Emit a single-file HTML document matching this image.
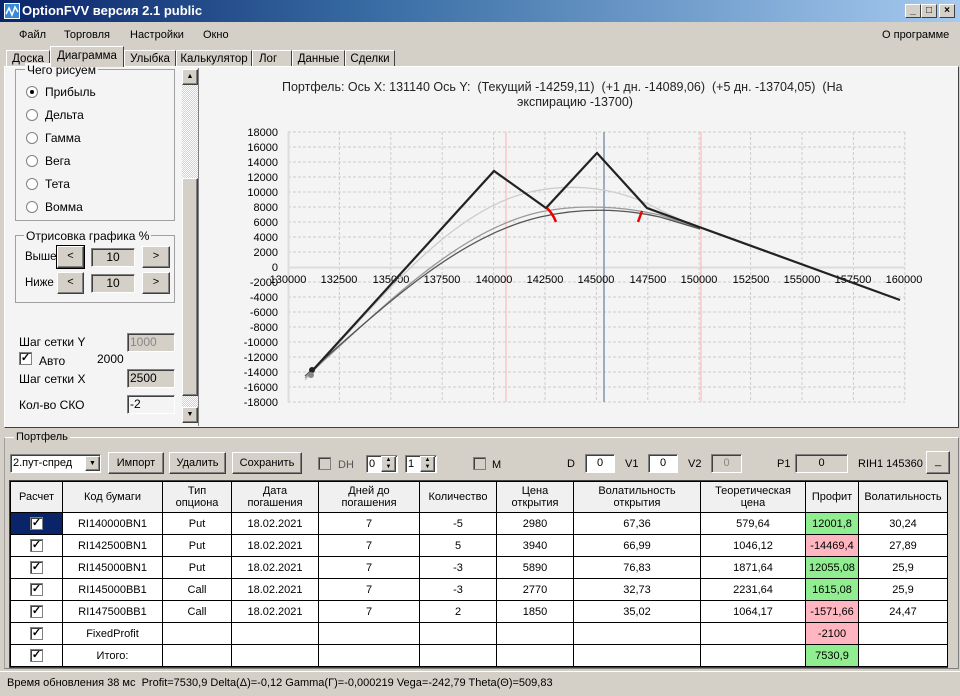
<!DOCTYPE html>
<html><head><meta charset="utf-8"><style>
*{box-sizing:border-box;margin:0;padding:0}
body{width:960px;height:696px;overflow:hidden;background:#d4d0c8;font-family:"Liberation Sans",sans-serif;font-size:11px;color:#000;position:relative}
.a{position:absolute}
.title{left:0;top:0;width:960px;height:22px;background:linear-gradient(90deg,#0a246a,#3a6ea5 40%,#a6caf0);color:#fff;font-weight:bold;font-size:13px;line-height:22px;padding-left:22px}
.tb{width:16px;height:14px;background:#d4d0c8;border:1px solid;border-color:#fff #404040 #404040 #fff;top:4px;font-size:10px;line-height:12px;text-align:center;color:#000;font-weight:bold}
.menu span{position:absolute;top:29px}
.tab{top:50px;height:17px;border:1px solid;border-color:#fff #404040 transparent #fff;background:#d4d0c8;padding-top:2px;font-size:11.5px;text-align:center;white-space:nowrap;overflow:hidden}
.grp{border:1px solid #a0a0a0}
.btn{background:#d4d0c8;border:1px solid;border-color:#fff #404040 #404040 #fff;text-align:center;box-shadow:inset -1px -1px #808080}
.fld{border:1px solid;border-color:#808080 #fff #fff #808080;box-shadow:inset 1px 1px #404040;text-align:center}
.rad{width:12px;height:12px;border-radius:50%;border:1px solid #808080;background:#fff;left:26px}
.lbl{left:45px;font-size:12px}
.cb{width:13px;height:13px;border:1px solid #808080;background:#fff;box-shadow:inset 1px 1px #404040;font-size:11px;line-height:10px;text-align:center;font-weight:bold}
table{border-collapse:collapse;position:absolute;left:10px;top:481px;background:#fff}
td{border:1px solid #000;text-align:center;height:22px;font-size:11px;padding:0}
tr.h td{height:31px;background:#f0f0f0;line-height:12px}
.g{background:#90ee90}.r{background:#ffb6c1}
</style></head><body>
<div class="a title">OptionFVV версия 2.1 public</div>
<div class="a" style="left:4px;top:3px;width:16px;height:16px;background:#3a8ad6;border:1px solid #fff"><svg width="14" height="14"><polyline points="1,10 4,4 7,11 10,3 13,8" fill="none" stroke="#fff" stroke-width="1.5"/></svg></div>
<div class="a tb" style="left:905px">_</div><div class="a tb" style="left:921px">□</div><div class="a tb" style="left:939px">×</div>
<div class="menu"><span style="left:19px">Файл</span><span style="left:64px">Торговля</span><span style="left:130px">Настройки</span><span style="left:203px">Окно</span><span style="left:882px">О программе</span></div>
<div class="a tab" style="left:6px;width:44px">Доска</div>
<div class="a tab" style="left:124px;width:52px">Улыбка</div>
<div class="a tab" style="left:176px;width:76px">Калькулятор</div>
<div class="a tab" style="left:252px;width:40px;text-align:left;padding-left:6px">Лог</div>
<div class="a tab" style="left:292px;width:53px">Данные</div>
<div class="a tab" style="left:345px;width:50px">Сделки</div>
<div class="a" style="left:4px;top:66px;width:955px;height:362px;border:1px solid;border-color:#fff #404040 #404040 #fff;background:#f4f4f4"></div>
<div class="a tab" style="left:50px;top:46px;width:74px;height:21px;padding-top:3px;border-bottom:none;z-index:2">Диаграмма</div>
<div class="a grp" style="left:15px;top:69px;width:160px;height:152px"></div>
<div class="a" style="left:25px;top:63px;background:#f4f4f4;padding:0 2px;font-size:12px">Чего рисуем</div>
<div class="a rad" style="top:86px"><div style="width:4px;height:4px;background:#000;margin:3px;border-radius:50%"></div></div><div class="a lbl" style="top:85px">Прибыль</div>
<div class="a rad" style="top:109px"></div><div class="a lbl" style="top:108px">Дельта</div>
<div class="a rad" style="top:132px"></div><div class="a lbl" style="top:131px">Гамма</div>
<div class="a rad" style="top:155px"></div><div class="a lbl" style="top:154px">Вега</div>
<div class="a rad" style="top:178px"></div><div class="a lbl" style="top:177px">Тета</div>
<div class="a rad" style="top:201px"></div><div class="a lbl" style="top:200px">Вомма</div>
<div class="a grp" style="left:15px;top:235px;width:160px;height:68px"></div>
<div class="a" style="left:24px;top:229px;background:#f4f4f4;padding:0 2px;font-size:12px">Отрисовка графика %</div>
<div class="a" style="left:25px;top:251px;font-size:11.5px">Выше</div><div class="a" style="left:25px;top:277px;font-size:11.5px">Ниже</div>
<div class="a btn" style="left:57px;top:246px;width:27px;height:22px;outline:1px solid #000;line-height:19px">&lt;</div>
<div class="a btn" style="left:57px;top:272px;width:27px;height:22px;line-height:19px">&lt;</div>
<div class="a fld" style="left:91px;top:248px;width:44px;height:19px;background:#d4d0c8;font-size:12px;line-height:17px">10</div>
<div class="a fld" style="left:91px;top:274px;width:44px;height:19px;background:#d4d0c8;font-size:12px;line-height:17px">10</div>
<div class="a btn" style="left:142px;top:246px;width:28px;height:22px;line-height:19px">&gt;</div>
<div class="a btn" style="left:142px;top:272px;width:28px;height:22px;line-height:19px">&gt;</div>
<div class="a" style="left:19px;top:335px;font-size:12px">Шаг сетки Y</div>
<div class="a fld" style="left:127px;top:333px;width:48px;height:19px;background:#d4d0c8;color:#888;text-align:left;font-size:12px;padding:1px 2px">1000</div>
<div class="a cb" style="left:19px;top:352px">✓</div><div class="a" style="left:39px;top:354px;font-size:12px">Авто</div><div class="a" style="left:97px;top:352px;font-size:12px">2000</div>
<div class="a" style="left:19px;top:372px;font-size:12px">Шаг сетки X</div>
<div class="a fld" style="left:127px;top:369px;width:48px;height:19px;background:#d4d0c8;text-align:left;font-size:12px;padding:1px 2px">2500</div>
<div class="a" style="left:19px;top:398px;font-size:12px">Кол-во СКО</div>
<div class="a fld" style="left:127px;top:395px;width:48px;height:19px;background:#f4f4f4;text-align:left;font-size:12px;padding:1px 2px">-2</div>
<div class="a" style="left:182px;top:69px;width:16px;height:354px;background:repeating-conic-gradient(#fff 0 25%,#d4d0c8 0 50%) 0 0/2px 2px"></div>
<div class="a btn" style="left:182px;top:69px;width:16px;height:16px;font-size:7px;line-height:14px">▲</div>
<div class="a btn" style="left:182px;top:178px;width:16px;height:218px"></div>
<div class="a btn" style="left:182px;top:407px;width:16px;height:16px;font-size:7px;line-height:14px">▼</div>
<div class="a" style="left:198px;top:68px;width:1px;height:358px;background:#808080"></div>
<div class="a" style="left:282px;top:80px;font-size:12.5px;color:#222;width:620px;line-height:15px">Портфель: Ось X: 131140 Ось Y:&nbsp; (Текущий -14259,11)&nbsp; (+1 дн. -14089,06)&nbsp; (+5 дн. -13704,05)&nbsp; (На<br><span style="padding-left:235px">экспирацию -13700)</span></div>
<svg class="a" style="left:0;top:0" width="960" height="430" font-family="Liberation Sans" font-size="11">
<g stroke="#ccc" stroke-dasharray="3,2">
<line x1="288" y1="132" x2="905" y2="132"/><line x1="288" y1="147" x2="905" y2="147"/><line x1="288" y1="162" x2="905" y2="162"/><line x1="288" y1="177" x2="905" y2="177"/><line x1="288" y1="192" x2="905" y2="192"/><line x1="288" y1="207" x2="905" y2="207"/><line x1="288" y1="222" x2="905" y2="222"/><line x1="288" y1="237" x2="905" y2="237"/><line x1="288" y1="252" x2="905" y2="252"/><line x1="288" y1="282" x2="905" y2="282"/><line x1="288" y1="297" x2="905" y2="297"/><line x1="288" y1="312" x2="905" y2="312"/><line x1="288" y1="327" x2="905" y2="327"/><line x1="288" y1="342" x2="905" y2="342"/><line x1="288" y1="357" x2="905" y2="357"/><line x1="288" y1="372" x2="905" y2="372"/><line x1="288" y1="387" x2="905" y2="387"/><line x1="288" y1="402" x2="905" y2="402"/>
<line x1="339.4" y1="132" x2="339.4" y2="402"/><line x1="390.8" y1="132" x2="390.8" y2="402"/><line x1="442.2" y1="132" x2="442.2" y2="402"/><line x1="493.6" y1="132" x2="493.6" y2="402"/><line x1="545" y1="132" x2="545" y2="402"/><line x1="596.4" y1="132" x2="596.4" y2="402"/><line x1="647.8" y1="132" x2="647.8" y2="402"/><line x1="699.2" y1="132" x2="699.2" y2="402"/><line x1="750.6" y1="132" x2="750.6" y2="402"/><line x1="802" y1="132" x2="802" y2="402"/><line x1="853.4" y1="132" x2="853.4" y2="402"/><line x1="904.8" y1="132" x2="904.8" y2="402"/>
</g>
<line x1="288.5" y1="132" x2="288.5" y2="402" stroke="#ddd" stroke-width="2"/>
<line x1="288" y1="267.5" x2="905" y2="267.5" stroke="#ddd" stroke-width="2"/>
<line x1="506" y1="132" x2="506" y2="402" stroke="#ffb0b8"/>
<line x1="701" y1="132" x2="701" y2="402" stroke="#ffb0b8"/>
<line x1="604" y1="132" x2="604" y2="402" stroke="#8096ac" stroke-width="1.5"/>
<g text-anchor="end" fill="#000">
<text x="278" y="136">18000</text><text x="278" y="151">16000</text><text x="278" y="166">14000</text><text x="278" y="181">12000</text><text x="278" y="196">10000</text><text x="278" y="211">8000</text><text x="278" y="226">6000</text><text x="278" y="241">4000</text><text x="278" y="256">2000</text><text x="278" y="271">0</text><text x="278" y="286">-2000</text><text x="278" y="301">-4000</text><text x="278" y="316">-6000</text><text x="278" y="331">-8000</text><text x="278" y="346">-10000</text><text x="278" y="361">-12000</text><text x="278" y="376">-14000</text><text x="278" y="391">-16000</text><text x="278" y="406">-18000</text>
</g>
<g text-anchor="middle">
<text x="288" y="283">130000</text><text x="339" y="283">132500</text><text x="391" y="283">135000</text><text x="442" y="283">137500</text><text x="494" y="283">140000</text><text x="545" y="283">142500</text><text x="596" y="283">145000</text><text x="648" y="283">147500</text><text x="699" y="283">150000</text><text x="751" y="283">152500</text><text x="802" y="283">155000</text><text x="853" y="283">157500</text><text x="904" y="283">160000</text>
</g>
<path d="M305,380 C380,300 450,210 530,192 C575,182 620,188 660,210 L700,229" fill="none" stroke="#ccc" stroke-width="1.3"/>
<path d="M305,378 C390,300 460,230 540,212 C580,204 620,206 660,215 L700,229" fill="none" stroke="#999" stroke-width="1.3"/>
<path d="M305,376 C390,300 460,236 540,217 C580,208 620,208 660,217 L700,229" fill="none" stroke="#555" stroke-width="1.3"/>
<polyline points="313,370 494,171 546,208 597,153 647,208 900,300" fill="none" stroke="#222" stroke-width="2.2"/>
<circle cx="312" cy="370" r="3" fill="#222"/><circle cx="311" cy="375" r="3" fill="#888"/>
<path d="M547,208 Q553,214 556,222" stroke="#e00" stroke-width="2.5" fill="none"/>
<path d="M642,211 L638,222" stroke="#e00" stroke-width="2.5" fill="none"/>
</svg>
<div class="a grp" style="left:4px;top:437px;width:955px;height:232px;border-color:#fff #808080 #808080 #a0a0a0"></div>
<div class="a" style="left:14px;top:431px;background:#d4d0c8;padding:0 2px;font-size:11px">Портфель</div>
<div class="a fld" style="left:10px;top:454px;width:91px;height:19px;background:#fff;text-align:left;padding:2px 2px">2.пут-спред</div>
<div class="a btn" style="left:85px;top:456px;width:15px;height:15px;font-size:7px;line-height:13px">▼</div>
<div class="a btn" style="left:108px;top:452px;width:56px;height:22px;line-height:20px">Импорт</div>
<div class="a btn" style="left:169px;top:452px;width:57px;height:22px;line-height:20px">Удалить</div>
<div class="a btn" style="left:232px;top:452px;width:70px;height:22px;line-height:20px">Сохранить</div>
<div class="a cb" style="left:318px;top:457px;background:#d4d0c8"></div><div class="a" style="left:338px;top:459px;color:#555">DH</div>
<div class="a fld" style="left:366px;top:455px;width:32px;height:18px;background:#fff;text-align:left;padding:2px">0</div>
<div class="a fld" style="left:405px;top:455px;width:32px;height:18px;background:#fff;text-align:left;padding:2px">1</div>
<div class="a btn" style="left:381px;top:456px;width:15px;height:16px;font-size:6px;line-height:7px">▲<br>▼</div>
<div class="a btn" style="left:420px;top:456px;width:15px;height:16px;font-size:6px;line-height:7px">▲<br>▼</div>
<div class="a cb" style="left:473px;top:457px;background:#d4d0c8"></div><div class="a" style="left:492px;top:459px">M</div>
<div class="a" style="left:567px;top:458px">D</div><div class="a fld" style="left:585px;top:454px;width:30px;height:19px;background:#fff;line-height:17px">0</div>
<div class="a" style="left:625px;top:458px">V1</div><div class="a fld" style="left:648px;top:454px;width:30px;height:19px;background:#fff;line-height:17px">0</div>
<div class="a" style="left:688px;top:458px">V2</div><div class="a fld" style="left:711px;top:454px;width:31px;height:19px;background:#d4d0c8;color:#888;line-height:17px">0</div>
<div class="a" style="left:777px;top:458px">P1</div><div class="a fld" style="left:795px;top:454px;width:53px;height:19px;background:#d4d0c8;line-height:17px">0</div>
<div class="a" style="left:858px;top:458px">RIH1 145360</div>
<div class="a btn" style="left:926px;top:451px;width:24px;height:23px;line-height:18px">_</div>
<div class="a" style="left:9px;top:480px;width:939px;height:188px;background:#fff;border:1px solid #404040"></div>
<table>
<col style="width:52px"><col style="width:100px"><col style="width:69px"><col style="width:87px"><col style="width:101px"><col style="width:77px"><col style="width:77px"><col style="width:127px"><col style="width:105px"><col style="width:53px"><col style="width:89px">
<tr class="h"><td>Расчет</td><td>Код бумаги</td><td>Тип<br>опциона</td><td>Дата<br>погашения</td><td>Дней до<br>погашения</td><td>Количество</td><td>Цена<br>открытия</td><td>Волатильность<br>открытия</td><td>Теоретическая<br>цена</td><td>Профит</td><td>Волатильность</td></tr>
<tr><td style="background:#0a246a"><span class="cb" style="display:inline-block">✓</span></td><td>RI140000BN1</td><td>Put</td><td>18.02.2021</td><td>7</td><td>-5</td><td>2980</td><td>67,36</td><td>579,64</td><td class="g">12001,8</td><td>30,24</td></tr>
<tr><td><span class="cb" style="display:inline-block">✓</span></td><td>RI142500BN1</td><td>Put</td><td>18.02.2021</td><td>7</td><td>5</td><td>3940</td><td>66,99</td><td>1046,12</td><td class="r">-14469,4</td><td>27,89</td></tr>
<tr><td><span class="cb" style="display:inline-block">✓</span></td><td>RI145000BN1</td><td>Put</td><td>18.02.2021</td><td>7</td><td>-3</td><td>5890</td><td>76,83</td><td>1871,64</td><td class="g">12055,08</td><td>25,9</td></tr>
<tr><td><span class="cb" style="display:inline-block">✓</span></td><td>RI145000BB1</td><td>Call</td><td>18.02.2021</td><td>7</td><td>-3</td><td>2770</td><td>32,73</td><td>2231,64</td><td class="g">1615,08</td><td>25,9</td></tr>
<tr><td><span class="cb" style="display:inline-block">✓</span></td><td>RI147500BB1</td><td>Call</td><td>18.02.2021</td><td>7</td><td>2</td><td>1850</td><td>35,02</td><td>1064,17</td><td class="r">-1571,66</td><td>24,47</td></tr>
<tr><td><span class="cb" style="display:inline-block">✓</span></td><td>FixedProfit</td><td></td><td></td><td></td><td></td><td></td><td></td><td></td><td class="r">-2100</td><td></td></tr>
<tr><td><span class="cb" style="display:inline-block">✓</span></td><td>Итого:</td><td></td><td></td><td></td><td></td><td></td><td></td><td></td><td class="g">7530,9</td><td></td></tr>
</table>
<div class="a" style="left:0;top:671px;width:960px;height:25px;background:#d4d0c8;border-top:1px solid #fff"></div>
<div class="a" style="left:7px;top:677px">Время обновления 38 мс&nbsp; Profit=7530,9 Delta(Δ)=-0,12 Gamma(Γ)=-0,000219 Vega=-242,79 Theta(Θ)=509,83</div>
</body></html>
